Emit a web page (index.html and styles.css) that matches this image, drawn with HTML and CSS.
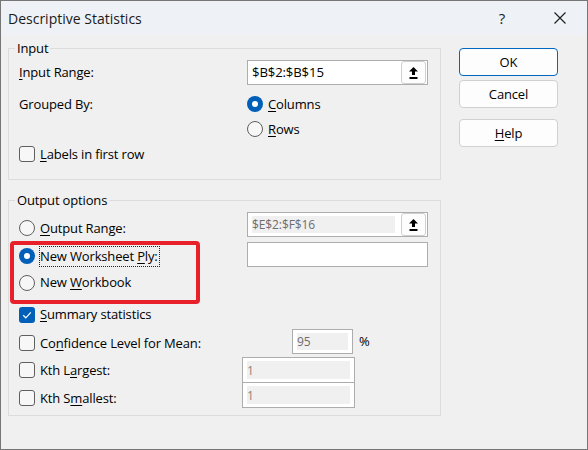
FILE: index.html
```html
<!DOCTYPE html>
<html>
<head>
<meta charset="utf-8">
<title>Descriptive Statistics</title>
<link rel="stylesheet" href="styles.css">
</head>
<body>
<div class="window">
  <div class="titlebar">
    <span class="title">Descriptive Statistics</span>
    <span class="tb-btn tb-help">?</span>
    <span class="tb-btn tb-close">
      <svg width="12" height="12" viewBox="0 0 12 12"><path d="M0.5 0.5 L11.5 11.5 M11.5 0.5 L0.5 11.5" stroke="#1a1a1a" stroke-width="1.1" fill="none"/></svg>
    </span>
  </div>
  <div class="content">
    <div class="main">
      <fieldset class="group group-input">
        <legend>Input</legend>
        <div class="row in-range">
          <span class="lead"><span class="text"><u>I</u>nput Range:</span></span>
          <div class="field">
            <span class="value">$B$2:$B$15</span>
            <span class="pick"><svg width="9" height="12" viewBox="0 0 9 12"><polygon points="4.5,0 9,4.5 6,4.5 6,8 3,8 3,4.5 0,4.5" fill="#000"/><rect x="0.5" y="10" width="8" height="2" fill="#000"/></svg></span>
          </div>
        </div>
        <div class="row in-grouped">
          <span class="lead"><span class="text">Grouped By:</span></span>
          <span class="opt"><span class="radio on"></span><span class="text"><u>C</u>olumns</span></span>
        </div>
        <div class="row in-rows">
          <span class="lead"></span>
          <span class="opt"><span class="radio"></span><span class="text"><u>R</u>ows</span></span>
        </div>
        <div class="row in-labels">
          <span class="opt"><span class="check"></span><span class="text"><u>L</u>abels in first row</span></span>
        </div>
      </fieldset>

      <fieldset class="group group-output">
        <legend>Output options</legend>
        <div class="out-body">
          <div class="row o-range">
            <span class="lead"><span class="opt"><span class="radio"></span><span class="text"><u>O</u>utput Range:</span></span></span>
            <div class="field disabled">
              <span class="value">$E$2:$F$16</span>
              <span class="pick"><svg width="9" height="12" viewBox="0 0 9 12"><polygon points="4.5,0 9,4.5 6,4.5 6,8 3,8 3,4.5 0,4.5" fill="#000"/><rect x="0.5" y="10" width="8" height="2" fill="#000"/></svg></span>
            </div>
          </div>
          <div class="row o-nwp">
            <span class="lead"><span class="opt"><span class="radio on"></span><span class="text focus">New Worksheet <u>P</u>ly:</span></span></span>
            <div class="field"></div>
          </div>
          <div class="row o-nwb">
            <span class="opt"><span class="radio"></span><span class="text">New <u>W</u>orkbook</span></span>
          </div>
          <div class="row o-summary">
            <span class="opt"><span class="check on"><svg width="16" height="16" viewBox="0 0 16 16"><path d="M4.2 8.3 L6.8 10.8 L11.8 5.4" stroke="#fff" stroke-width="1.2" fill="none"/></svg></span><span class="text"><u>S</u>ummary statistics</span></span>
          </div>
          <div class="row o-conf">
            <span class="lead lead-conf"><span class="opt"><span class="check"></span><span class="text">Co<u>n</u>fidence Level for Mean:</span></span></span>
            <div class="field disabled small"><span class="value">95</span></div>
            <span class="pct">%</span>
          </div>
          <div class="row o-kl">
            <span class="lead lead-kth"><span class="opt"><span class="check"></span><span class="text">Kth L<u>a</u>rgest:</span></span></span>
            <div class="field disabled kth"><span class="value">1</span></div>
          </div>
          <div class="row o-ks">
            <span class="lead lead-kth"><span class="opt"><span class="check"></span><span class="text">Kth S<u>m</u>allest:</span></span></span>
            <div class="field disabled kth"><span class="value">1</span></div>
          </div>
          <div class="annotation"></div>
        </div>
      </fieldset>
    </div>

    <div class="buttons">
      <div class="btn default">OK</div>
      <div class="btn cancel">Cancel</div>
      <div class="btn help"><span><u>H</u>elp</span></div>
    </div>
  </div>
</div>
</body>
</html>
```

FILE: styles.css
```css
* { box-sizing: border-box; }
html, body { margin: 0; padding: 0; }
body {
  width: 588px;
  height: 450px;
  background: #f0f0f0;
  font-family: "Segoe UI", "Open Sans", "Noto Sans", sans-serif;
  font-size: 13px;
  letter-spacing: -0.15px;
  color: #000;
  overflow: hidden;
}
u { text-decoration: underline; text-underline-offset: 2px; text-decoration-thickness: 1px; }

.window {
  width: 588px;
  height: 450px;
  border: 1px solid #767676;
  background: #f0f0f0;
  display: flex;
  flex-direction: column;
}

.titlebar {
  height: 34px;
  flex: none;
  background: #eef2f7;
  display: flex;
  align-items: center;
  padding-left: 7px;
  padding-right: 4px;
}
.title { flex: 1; color: #1a1a1a; line-height: 19px; font-size: 14px; letter-spacing: 0; }
.tb-btn {
  width: 46px;
  height: 34px;
  display: flex;
  align-items: center;
  justify-content: center;
  color: #1a1a1a;
}
.tb-help { margin-right: 12px; font-size: 15px; letter-spacing: 0; }

.content {
  display: flex;
  padding: 3px 0 0 7px;
}
.main { width: 433px; flex: none; }

.group {
  margin: 0;
  padding: 0 12px 0 10px;
  border: 1px solid #dcdcdc;
  min-width: 0;
}
.group legend {
  padding: 0 2px;
  margin-left: -4px;
  line-height: 20px;
}
.group-input { padding-bottom: 13px; }
.group-output { margin-top: 10px; padding-bottom: 7px; }

.row {
  display: flex;
  align-items: center;
}
.text { line-height: 19px; white-space: nowrap; }
.lead {
  width: 228px;
  flex: none;
  display: flex;
  align-items: center;
}
.lead-conf { width: 273px; }
.lead-kth { width: 223px; }

.opt {
  display: flex;
  align-items: center;
  gap: 5px;
}

.radio {
  width: 16px;
  height: 16px;
  border-radius: 50%;
  border: 1px solid #5f5f5f;
  background: #f7f7f7;
  flex: none;
  position: relative;
}
.radio.on {
  border: none;
  background: #005fb8;
}
.radio.on::after {
  content: "";
  position: absolute;
  left: 5px;
  top: 5px;
  width: 6px;
  height: 6px;
  border-radius: 50%;
  background: #fff;
}

.check {
  width: 16px;
  height: 16px;
  border-radius: 3px;
  border: 1px solid #5f5f5f;
  background: #f7f7f7;
  flex: none;
  display: flex;
}
.check.on { border: none; background: #005fb8; }

.field {
  width: 181px;
  height: 25px;
  border: 1px solid #adadad;
  background: #fff;
  display: flex;
  align-items: stretch;
  flex: none;
}
.field .value {
  flex: 1;
  display: flex;
  align-items: center;
  padding-left: 4px;
  line-height: 19px;
  font-size: 13.2px;
  letter-spacing: -0.15px;
}
.field.disabled .value {
  margin: 3px 6px 3px 4px;
  padding-left: 0;
  background: #f0f0f0;
  color: #6d6d6d;
  font-size: 12px;
  letter-spacing: -0.1px;
}
.field.small { width: 61px; }
.field.small .value { margin-right: 4px; }
.field.kth { width: 113px; height: 26px; }
.field.kth .value { margin-right: 4px; color: #8c8478; }

.pick {
  width: 25px;
  margin-right: 1px;
  flex: none;
  background: #fdfdfd;
  border: 1px solid #cfcfcf;
  border-radius: 3px;
  display: flex;
  align-items: center;
  justify-content: center;
}
.pick svg { margin-top: 1px; }

.pct { margin-left: 6px; line-height: 19px; }

/* input rows */
.in-range { height: 26px; margin-top: 1px; }
.in-grouped { height: 24px; margin-top: 7px; }
.in-rows { height: 24px; margin-top: 1px; }
.in-labels { height: 24px; margin-top: 1px; }

/* output rows */
.out-body { position: relative; }
.o-range { height: 25px; margin-top: 2px; }
.o-range .opt { margin-top: 7px; }
.o-nwp { height: 25px; margin-top: 5px; }
.o-nwp .opt { margin-top: 3px; }
.o-nwb { height: 25px; margin-top: 3px; }
.o-summary { height: 25px; margin-top: 7px; }
.o-conf { height: 25px; margin-top: 2px; }
.o-conf .opt { margin-top: 3px; }
.o-kl { height: 26px; margin-top: 3px; }
.o-ks { height: 26px; margin-top: -1px; }
.o-ks .opt { margin-top: 6px; }

.focus { outline: 1px dotted #222; outline-offset: 0; padding-right: 1px; }

.annotation {
  position: absolute;
  left: -9px;
  top: 29px;
  width: 190px;
  height: 63px;
  border: 4px solid #e8202a;
  border-radius: 4px;
  pointer-events: none;
}

.buttons {
  width: 99px;
  margin-left: 18px;
  padding-top: 10px;
  display: flex;
  flex-direction: column;
  flex: none;
}
.btn {
  height: 28px;
  border: 1px solid #d0d0d0;
  border-radius: 4px;
  background: #fdfdfd;
  display: flex;
  align-items: center;
  justify-content: center;
  line-height: 19px;
}
.btn.default { border-color: #0067c0; }
.btn.cancel { margin-top: 4px; }
.btn.help { margin-top: 11px; }
```
